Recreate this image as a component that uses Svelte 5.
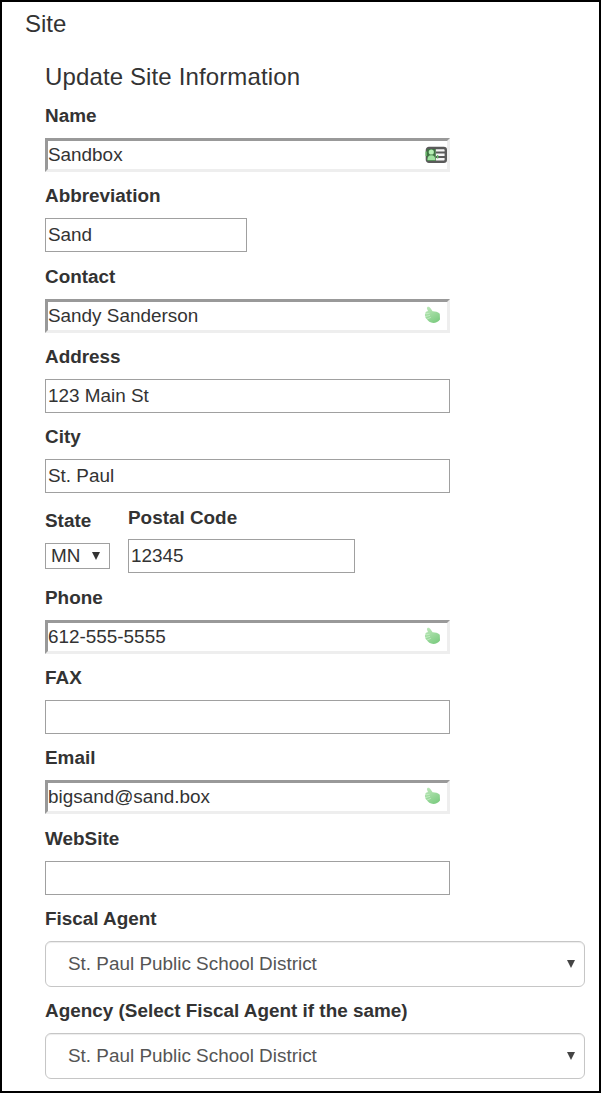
<script>
  const before = [
    { label: 'Name', value: 'Sandbox', inset: true, icon: 'card' },
    { label: 'Abbreviation', value: 'Sand', short: true },
    { label: 'Contact', value: 'Sandy Sanderson', inset: true, icon: 'hand' },
    { label: 'Address', value: '123 Main St' },
    { label: 'City', value: 'St. Paul' }
  ];
  const after = [
    { label: 'Phone', value: '612-555-5555', inset: true, icon: 'hand' },
    { label: 'FAX', value: '' },
    { label: 'Email', value: 'bigsand@sand.box', inset: true, icon: 'hand' },
    { label: 'WebSite', value: '' }
  ];
  const agents = [
    { label: 'Fiscal Agent', value: 'St. Paul Public School District' },
    { label: 'Agency (Select Fiscal Agent if the same)', value: 'St. Paul Public School District' }
  ];
</script>

{#snippet field(f)}
  <label class="field">
    <span class="label">{f.label}</span>
    <span class="box" class:inset={f.inset} class:short={f.short}>
      <input type="text" value={f.value} />
      {#if f.icon === 'card'}
        <svg class="card" width="22" height="18" viewBox="0 0 22 18">
          <rect x="1.9" y="2" width="18.9" height="13.8" rx="2" fill="#f4f4f4" stroke="#5a5a5a" stroke-width="2.4" />
          <path d="M2 3h8.800v12H2z" fill="#3f7343" />
          <circle cx="6.300" cy="6" r="2.600" fill="#b5efb4" />
          <path d="M2.400 14.200c0-3.200 1-4.900 3.900-4.900s4 1.700 4 4.900z" fill="#a0e2a0" />
          <path d="M11 6.500h9M11 11h9" stroke="#5a5a5a" stroke-width="2" />
          <path d="M1.200 5.500v4.500M12.600 9v3.500" stroke="#67bd69" stroke-width="1.4" />
        </svg>
      {:else if f.icon === 'hand'}
        <svg class="hand" width="17" height="18" viewBox="0 0 17 18">
          <defs>
            <linearGradient id="palm" x1="0" y1="0" x2=".6" y2="1">
              <stop offset="0" stop-color="#c0eabd" />
              <stop offset="1" stop-color="#80cd84" />
            </linearGradient>
          </defs>
          <path d="M3.200 1.200C4.300.3 5.700 1 6.700 2.500L8.600 5.300C11 5.200 13.600 6 15.800 7.700L16 13.400C14.400 15.600 12 16.900 9.300 16.900C6.400 16.900 3.800 15 2.500 12.800C1.600 12.300 1.200 11.300 1.500 10.300C.7 9.400.7 8.200 1.500 7.400C1.200 6.200 2 5.400 3.400 5.300L4 4.900C3.500 3.700 2.300 2.200 3.200 1.200Z" fill="url(#palm)" />
          <path d="M2 7.800l3.600-.6M2 10.400l4-1M3.200 12.900l3.600-1.500" fill="none" stroke="#d0f0ce" stroke-width=".7" />
        </svg>
      {/if}
    </span>
  </label>
{/snippet}

<main>
  <h1>Site</h1>
  <form>
    <h2>Update Site Information</h2>
    {#each before as f}{@render field(f)}{/each}
    <div class="row">
      <div class="state">
        <span class="label">State</span>
        <button type="button" class="mini"><span>MN</span>
          <svg width="8" height="8" viewBox="0 0 8 8"><path d="M0 0h8L4 8z" fill="#333" /></svg>
        </button>
      </div>
      <div class="postal">{@render field({ label: 'Postal Code', value: '12345' })}</div>
    </div>
    {#each after as f}{@render field(f)}{/each}
    {#each agents as a}
      <div class="field">
        <span class="label">{a.label}</span>
        <button type="button" class="select"><span>{a.value}</span>
          <svg width="8" height="8" viewBox="0 0 8 8"><path d="M0 0h8L4 8z" fill="#444" /></svg>
        </button>
      </div>
    {/each}
  </form>
</main>

<style>
  :global(body) { margin: 0; background: #fff; }
  main {
    box-sizing: border-box;
    width: 601px;
    height: 1093px;
    overflow: hidden;
    border: 2px solid #000;
    padding: 0 14px 0 23px;
    font-family: "Liberation Sans", Arial, sans-serif;
    font-size: 18.9px;
    color: #333;
  }
  h1, h2 { margin: 0; font-size: 24px; font-weight: 400; }
  h1 { height: 43.5px; line-height: 43.5px; }
  form { margin-left: 20px; }
  h2 { height: 46.4px; line-height: 62px; letter-spacing: .13px; }
  .field { display: block; }
  .label {
    display: block;
    box-sizing: border-box;
    height: 46.27px;
    padding-top: 1.3px;
    line-height: 46.27px;
    font-weight: 700;
    white-space: nowrap;
  }
  .box {
    box-sizing: border-box;
    display: flex;
    align-items: center;
    width: 405px;
    height: 34px;
    border: 1px solid #a0a0a0;
    padding-left: 2px;
  }
  .box.short { width: 202px; }
  .box.inset {
    border: 3px solid;
    border-color: #999 #eee #eee #999;
    padding-left: 0;
  }
  input {
    flex: 1;
    min-width: 0;
    height: 26px;
    border: 0;
    outline: 0;
    padding: 0;
    background: transparent;
    font: inherit;
    color: inherit;
  }
  svg { display: block; flex: none; }
  .hand { margin-right: 6px; margin-top: -2px; }
  .row { display: flex; height: 80.27px; }
  .state { width: 83px; }
  .state .label { padding-top: 5px; height: 50px; }
  .postal { width: 227px; }
  .postal .box { width: 227px; }
  button {
    box-sizing: border-box;
    display: flex;
    align-items: center;
    justify-content: space-between;
    background: #fff;
    font: inherit;
    text-align: left;
  }
  .mini { width: 65px; height: 26px; padding: 0 9px 0 5px; border: 1px solid #a0a0a0; color: #333; }
  .select {
    width: 540px;
    height: 46px;
    padding: 0 9px 0 22px;
    border: 1px solid #c6c6c6;
    border-radius: 6px;
    box-shadow: inset 0 1px 1px rgba(0, 0, 0, .075);
    color: #555;
  }
</style>
